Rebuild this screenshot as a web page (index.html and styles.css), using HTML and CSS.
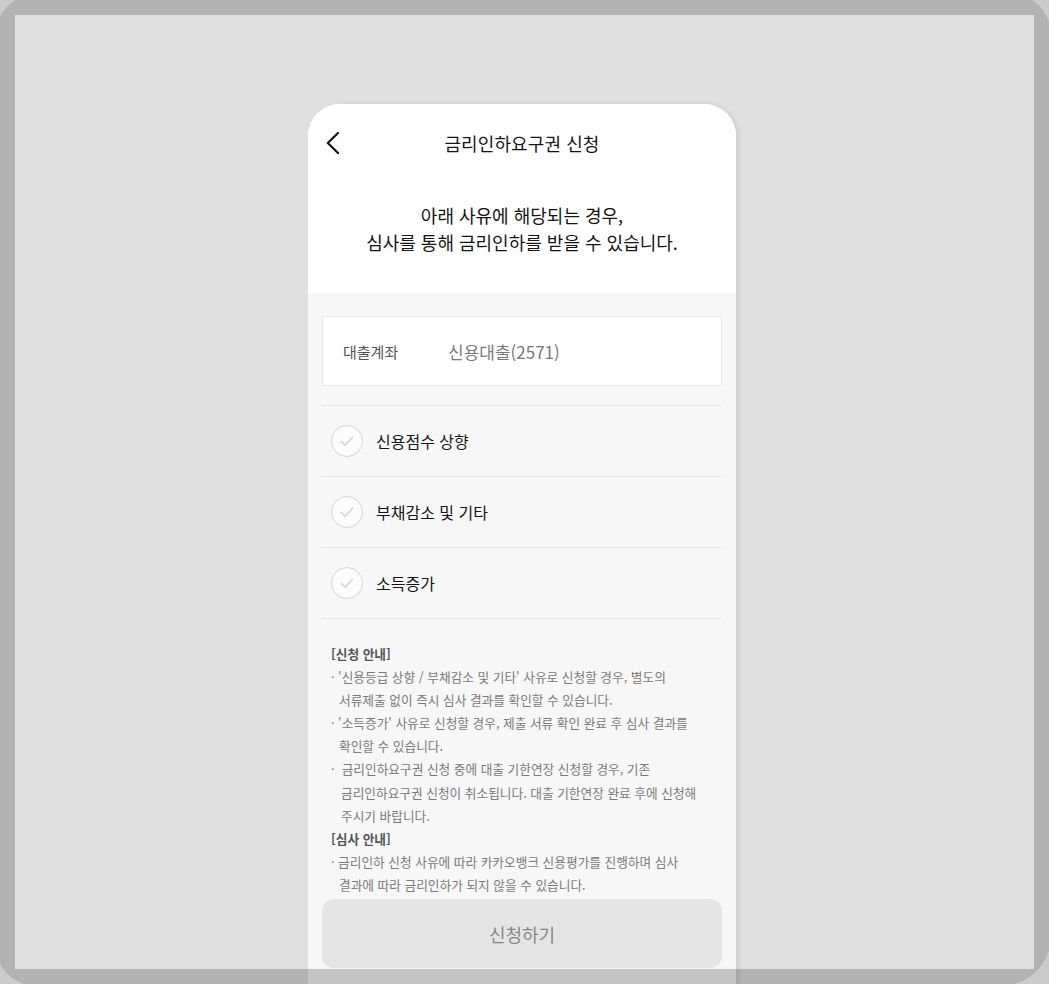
FILE: index.html
```html
<!DOCTYPE html>
<html lang="ko">
<head>
<meta charset="utf-8">
<title>금리인하요구권 신청</title>
<link rel="stylesheet" href="styles.css">
</head>
<body>
<div class="viewport">
  <div class="screen">
    <div class="card">
      <div class="card-top">
        <div class="nav">
          <button class="back" aria-label="뒤로">
            <svg width="14" height="22" viewBox="0 0 14 22"><path d="M12 1 L1.8 11 L12 21" fill="none" stroke="#111" stroke-width="2.2" stroke-linecap="round" stroke-linejoin="round"/></svg>
          </button>
          <h1 class="title">금리인하요구권 신청</h1>
          <span class="nav-spacer"></span>
        </div>
        <p class="heading">아래 사유에 해당되는 경우,<br>심사를 통해 금리인하를 받을 수 있습니다.</p>
      </div>
      <div class="card-body">
        <div class="account">
          <span class="account-label">대출계좌</span>
          <span class="account-value">신용대출(2571)</span>
        </div>
        <ul class="reasons">
          <li class="reason"><span class="check"><svg width="32" height="32" viewBox="0 0 32 32"><path d="M10 16.5 L14 20.5 L22 12" fill="none" stroke="#cfcfcf" stroke-width="1.3" stroke-linecap="round" stroke-linejoin="round"/></svg></span><span class="reason-text">신용점수 상향</span></li>
          <li class="reason"><span class="check"><svg width="32" height="32" viewBox="0 0 32 32"><path d="M10 16.5 L14 20.5 L22 12" fill="none" stroke="#cfcfcf" stroke-width="1.3" stroke-linecap="round" stroke-linejoin="round"/></svg></span><span class="reason-text">부채감소 및 기타</span></li>
          <li class="reason"><span class="check"><svg width="32" height="32" viewBox="0 0 32 32"><path d="M10 16.5 L14 20.5 L22 12" fill="none" stroke="#cfcfcf" stroke-width="1.3" stroke-linecap="round" stroke-linejoin="round"/></svg></span><span class="reason-text">소득증가</span></li>
        </ul>
        <div class="info">
          <p class="info-head">[신청 안내]</p>
          <p class="info-item">· '신용등급 상향 / 부채감소 및 기타' 사유로 신청할 경우, 별도의<br>서류제출 없이 즉시 심사 결과를 확인할 수 있습니다.</p>
          <p class="info-item">· '소득증가' 사유로 신청할 경우, 제출 서류 확인 완료 후 심사 결과를<br>확인할 수 있습니다.</p>
          <p class="info-item wide">·&nbsp; 금리인하요구권 신청 중에 대출 기한연장 신청할 경우, 기존<br>금리인하요구권 신청이 취소됩니다. 대출 기한연장 완료 후에 신청해<br>주시기 바랍니다.</p>
          <p class="info-head">[심사 안내]</p>
          <p class="info-item">· 금리인하 신청 사유에 따라 카카오뱅크 신용평가를 진행하며 심사<br>결과에 따라 금리인하가 되지 않을 수 있습니다.</p>
        </div>
        <button class="submit" disabled>신청하기</button>
      </div>
    </div>
  </div>
  <div class="bezel"><div class="hole"></div></div>
</div>
</body>
</html>
```
FILE: styles.css
```css
* { box-sizing: border-box; }
html, body { margin: 0; padding: 0; }
body {
  font-family: "Noto Sans CJK KR", "Noto Sans", sans-serif;
  background: #e0e0e0;
  overflow: hidden;
}
.viewport {
  position: relative;
  width: 1049px;
  height: 984px;
  overflow: hidden;
}
.screen {
  height: 984px;
  background: #e0e0e0;
  padding-top: 104px;
}
.card {
  width: 428px;
  margin-left: 308px;
  background: #f7f7f7;
  border-radius: 32px 32px 0 0;
  box-shadow: 3px 0 5px rgba(0,0,0,0.08);
  padding-bottom: 40px;
}
.card-top {
  background: #fff;
  border-radius: 32px 32px 0 0;
  padding: 0 14px 37px;
}
.nav {
  height: 78px;
  display: grid;
  grid-template-columns: 40px 1fr 40px;
  align-items: center;
}
.back {
  border: 0;
  background: none;
  padding: 0 0 0 4px;
  width: 40px;
  height: 40px;
  display: flex;
  align-items: center;
  cursor: pointer;
}
.title {
  margin: 0;
  text-align: center;
  font-size: 18px;
  font-weight: 400;
  color: #151515;
  letter-spacing: 0.1px;
}
.heading {
  margin: 20px 0 0;
  text-align: center;
  font-size: 18px;
  line-height: 27px;
  color: #151515;
}
.card-body {
  padding: 23px 14px 0;
}
.account {
  height: 70px;
  background: #fff;
  border: 1px solid #e8e8e8;
  display: flex;
  align-items: center;
  padding-left: 20px;
}
.account-label {
  width: 105px;
  font-size: 15px;
  color: #555;
}
.account-value {
  font-size: 17px;
  color: #7a7a7a;
}
.reasons {
  list-style: none;
  margin: 19px 0 0;
  padding: 0;
  border-bottom: 1px solid #e6e6e6;
}
.reason {
  height: 71px;
  border-top: 1px solid #e6e6e6;
  display: flex;
  align-items: center;
  padding-left: 9px;
  gap: 13px;
}
.check {
  width: 32px;
  height: 32px;
  border-radius: 50%;
  border: 1px solid #d4d4d4;
  background: #fcfcfc;
  display: flex;
  align-items: center;
  justify-content: center;
}
.check svg { display: block; }
.reason-text {
  font-size: 16px;
  color: #151515;
}
.info {
  padding: 23px 9px 0;
  font-size: 12.7px;
  line-height: 23.1px;
  color: #7a7a7a;
}
.info p { margin: 0; }
.info-head {
  font-weight: 700;
  color: #555;
}
.info-item {
  padding-left: 8px;
  text-indent: -8px;
}
.info-item.wide {
  padding-left: 10px;
  text-indent: -10px;
}
.submit {
  display: block;
  width: 100%;
  height: 69px;
  margin-top: 3px;
  border: 0;
  border-radius: 12px;
  background: #e5e5e5;
  color: #888;
  font-family: inherit;
  font-size: 18px;
}
.bezel {
  position: absolute;
  top: -6px;
  left: -4px;
  right: -2px;
  bottom: -2px;
  border-radius: 40px 40px 50px 40px;
  overflow: hidden;
  box-shadow: 0 0 0 200px rgba(0,0,0,0.09);
  pointer-events: none;
}
.hole {
  position: absolute;
  top: 21px;
  left: 19px;
  right: 17px;
  bottom: 17px;
  box-shadow: 0 0 0 80px rgba(0,0,0,0.2);
}
```
